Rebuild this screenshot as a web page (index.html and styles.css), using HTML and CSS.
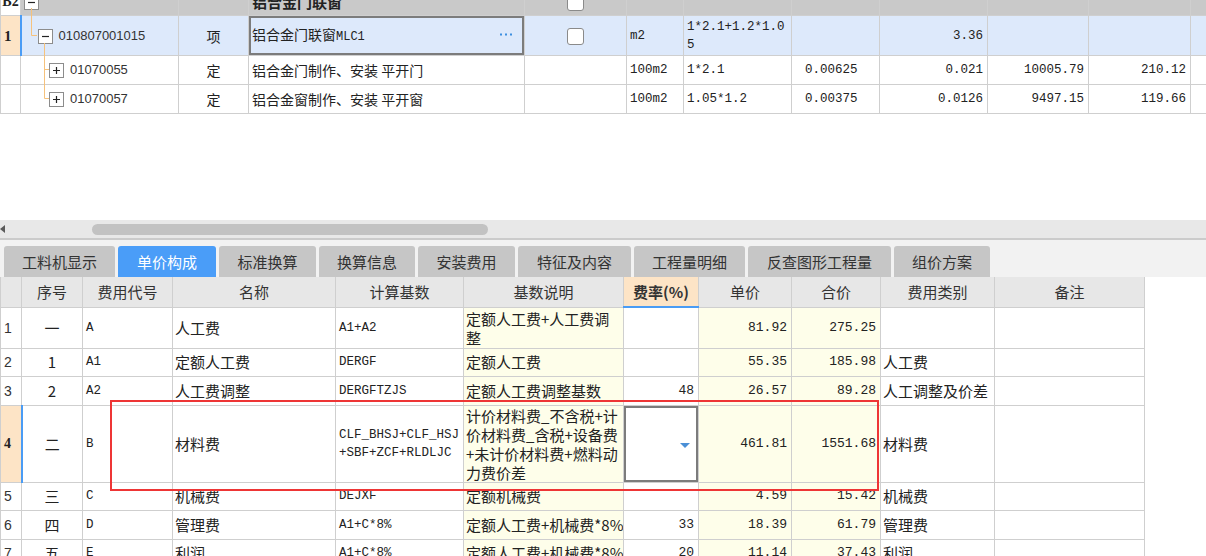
FILE: index.html
```html
<!DOCTYPE html>
<html lang="zh-CN">
<head>
<meta charset="utf-8">
<title>单价构成</title>
<link rel="stylesheet" href="styles.css">
</head>
<body>
<div class="top">
  <table class="tt">
    <colgroup>
      <col class="w20"><col class="w158"><col class="w70"><col class="w276"><col class="w102"><col class="w57"><col class="w108"><col class="w88"><col class="w108"><col class="w101"><col class="w102"><col class="w40">
    </colgroup>
    <tr class="r0">
      <td class="num0">B2</td>
      <td class="tree p0"><span class="box"><svg width="9" height="9" viewBox="0 0 9 9"><path d="M1 4.5h7" stroke="#222" stroke-width="1.2"/></svg></span></td>
      <td></td>
      <td class="bold">铝合金门联窗</td>
      <td class="c"><span class="chk"></span></td>
      <td></td><td></td><td></td><td></td><td></td><td></td><td></td>
    </tr>
    <tr class="r1 sel">
      <td class="num1">1</td>
      <td class="tree p1"><span class="box"><svg width="9" height="9" viewBox="0 0 9 9"><path d="M1 4.5h7" stroke="#222" stroke-width="1.2"/></svg></span><span class="code">010807001015</span></td>
      <td class="c">项</td>
      <td class="edit"><span class="etext">铝合金门联窗<span class="mono">MLC1</span></span><svg class="dots" width="12" height="3" viewBox="0 0 12 3"><rect x="0" y="0.5" width="2" height="2" fill="#3d8fe0"/><rect x="5" y="0.5" width="2" height="2" fill="#3d8fe0"/><rect x="10" y="0.5" width="2" height="2" fill="#3d8fe0"/></svg></td>
      <td class="c"><span class="chk"></span></td>
      <td class="mono">m2</td>
      <td class="mono lh">1*2.1+1.2*1.0<br>5</td>
      <td></td>
      <td class="mono r">3.36</td>
      <td></td><td></td><td></td>
    </tr>
    <tr class="r2">
      <td></td>
      <td class="tree p2"><span class="box"><svg width="9" height="9" viewBox="0 0 9 9"><path d="M1 4.5h7M4.5 1v7" stroke="#222" stroke-width="1.2"/></svg></span><span class="code">01070055</span></td>
      <td class="c">定</td>
      <td>铝合金门制作、安装 平开门</td>
      <td></td>
      <td class="mono">100m2</td>
      <td class="mono">1*2.1</td>
      <td class="mono ind">0.00625</td>
      <td class="mono r">0.021</td>
      <td class="mono r">10005.79</td>
      <td class="mono r">210.12</td>
      <td></td>
    </tr>
    <tr class="r2">
      <td></td>
      <td class="tree p2"><span class="box"><svg width="9" height="9" viewBox="0 0 9 9"><path d="M1 4.5h7M4.5 1v7" stroke="#222" stroke-width="1.2"/></svg></span><span class="code">01070057</span></td>
      <td class="c">定</td>
      <td>铝合金窗制作、安装 平开窗</td>
      <td></td>
      <td class="mono">100m2</td>
      <td class="mono">1.05*1.2</td>
      <td class="mono ind">0.00375</td>
      <td class="mono r">0.0126</td>
      <td class="mono r">9497.15</td>
      <td class="mono r">119.66</td>
      <td></td>
    </tr>
  </table>
  <svg class="treelines" width="60" height="113" viewBox="0 0 60 113">
    <path d="M31.5 8V35.5H37M44.5 43V98.5H49M44.5 69.5H49" fill="none" stroke="#f6c27c" stroke-width="1"/>
  </svg>
</div>

<div class="hscroll">
  <span class="arrow"></span>
  <span class="thumb"></span>
</div>

<div class="lower">
  <div class="tabs">
    <div class="tab t1">工料机显示</div>
    <div class="tab t2 active">单价构成</div>
    <div class="tab t3">标准换算</div>
    <div class="tab t4">换算信息</div>
    <div class="tab t5">安装费用</div>
    <div class="tab t6">特征及内容</div>
    <div class="tab t7">工程量明细</div>
    <div class="tab t8">反查图形工程量</div>
    <div class="tab t9">组价方案</div>
  </div>

  <table class="lt">
    <colgroup>
      <col class="w21"><col class="w61"><col class="w90"><col class="w163"><col class="w128"><col class="w160"><col class="w75"><col class="w93"><col class="w89"><col class="w114"><col class="w150">
    </colgroup>
    <tr class="hd">
      <th></th><th>序号</th><th>费用代号</th><th>名称</th><th>计算基数</th><th>基数说明</th><th class="rate">费率(%)</th><th>单价</th><th>合价</th><th>费用类别</th><th>备注</th>
    </tr>
    <tr class="h41">
      <td class="rn">1</td><td class="c">一</td><td class="mono">A</td><td>人工费</td><td class="mono">A1+A2</td>
      <td class="y ml">定额人工费+人工费调<br>整</td><td></td><td class="y mono r">81.92</td><td class="y mono r">275.25</td><td></td><td></td>
    </tr>
    <tr class="h28">
      <td class="rn">2</td><td class="c">1</td><td class="mono">A1</td><td>定额人工费</td><td class="mono">DERGF</td>
      <td class="y">定额人工费</td><td></td><td class="y mono r">55.35</td><td class="y mono r">185.98</td><td>人工费</td><td></td>
    </tr>
    <tr class="h29">
      <td class="rn">3</td><td class="c">2</td><td class="mono">A2</td><td>人工费调整</td><td class="mono">DERGFTZJS</td>
      <td class="y">定额人工费调整基数</td><td class="mono r">48</td><td class="y mono r">26.57</td><td class="y mono r">89.28</td><td>人工调整及价差</td><td></td>
    </tr>
    <tr class="h77">
      <td class="rn cur">4</td><td class="c">二</td><td class="mono">B</td><td>材料费</td><td class="mono lh">CLF_BHSJ+CLF_HSJ<br>+SBF+ZCF+RLDLJC</td>
      <td class="y ml">计价材料费_不含税+计<br>价材料费_含税+设备费<br>+未计价材料费+燃料动<br>力费价差</td>
      <td class="drop"><span class="tri"></span></td><td class="y mono r">461.81</td><td class="y mono r">1551.68</td><td>材料费</td><td></td>
    </tr>
    <tr class="h28">
      <td class="rn">5</td><td class="c">三</td><td class="mono">C</td><td>机械费</td><td class="mono">DEJXF</td>
      <td class="y">定额机械费</td><td></td><td class="y mono r">4.59</td><td class="y mono r">15.42</td><td>机械费</td><td></td>
    </tr>
    <tr class="h29">
      <td class="rn">6</td><td class="c">四</td><td class="mono">D</td><td>管理费</td><td class="mono">A1+C*8%</td>
      <td class="y">定额人工费+机械费*8%</td><td class="mono r">33</td><td class="y mono r">18.39</td><td class="y mono r">61.79</td><td>管理费</td><td></td>
    </tr>
    <tr class="h28">
      <td class="rn">7</td><td class="c">五</td><td class="mono">E</td><td>利润</td><td class="mono">A1+C*8%</td>
      <td class="y">定额人工费+机械费*8%</td><td class="mono r">20</td><td class="y mono r">11.14</td><td class="y mono r">37.43</td><td>利润</td><td></td>
    </tr>
  </table>

  <div class="mark"></div>
</div>
</body>
</html>
```

FILE: styles.css
```css
* { box-sizing: border-box; }
html, body { margin: 0; padding: 0; }
body {
  width: 1206px;
  height: 556px;
  overflow: hidden;
  background: #fff;
  color: #222;
  font-family: "Noto Sans CJK SC", "Liberation Sans", sans-serif;
}

/* ---------- top grid ---------- */
.top {
  position: relative;
  height: 220px;
  overflow: hidden;
}
.tt {
  border-collapse: collapse;
  table-layout: fixed;
  width: 1230px;
  margin-top: -13px;
  font-size: 14px;
}
.tt td {
  border: 1px solid #cfcfcf;
  padding: 0 3px;
  white-space: nowrap;
  overflow: hidden;
  vertical-align: middle;
  line-height: 16px;
}
.w20 { width: 20px; } .w158 { width: 158px; } .w70 { width: 70px; } .w276 { width: 276px; }
.w102 { width: 102px; } .w57 { width: 57px; } .w108 { width: 108px; } .w88 { width: 88px; }
.w101 { width: 101px; } .w40 { width: 40px; }
.w21 { width: 21px; } .w61 { width: 61px; } .w90 { width: 90px; } .w163 { width: 163px; }
.w128 { width: 128px; } .w160 { width: 160px; } .w75 { width: 75px; } .w93 { width: 93px; }
.w89 { width: 89px; } .w114 { width: 114px; } .w150 { width: 150px; }

.r0 { height: 28px; background: #c9c9c9; }
.r1 { height: 40px; }
.r2 { height: 29px; }
.sel { background: #dde9fb; }

.num0 {
  background: #fff;
  font-family: "Liberation Serif", serif;
  font-weight: bold;
  font-size: 14px;
  text-align: center;
  padding: 0 !important;
}
.num1 {
  background: #fde4c6;
  border-right: 2px solid #4a9cf5 !important;
  font-family: "Liberation Serif", serif;
  font-weight: bold;
  font-size: 15px;
  padding-left: 3px !important;
}
.bold { font-weight: bold; font-size: 15px; }
.c { text-align: center; }
.r { text-align: right; padding-right: 4px !important; }
.mono {
  font-family: "Liberation Mono", monospace;
  font-size: 12.5px;
}
.ind { padding-left: 13px !important; }
.lh { line-height: 18px !important; }

.tree { font-size: 13px; }
.tree .box {
  display: inline-flex;
  align-items: center;
  justify-content: center;
  width: 15px;
  height: 15px;
  border: 1px solid #8c8c8c;
  background: #fff;
  vertical-align: middle;
  margin-right: 6px;
}
.tree .code {
  font-family: "Liberation Sans", sans-serif;
  font-size: 13px;
  color: #333;
  vertical-align: middle;
}
.p0 { padding-left: 3px !important; }
.p1 { padding-left: 16px !important; }
.p2 { padding-left: 28px !important; }

.edit {
  box-shadow: inset 0 0 0 2px #7c7c7c;
}
.edit .etext { float: left; }
.edit .mono { font-size: 12px; }
.edit .dots {
  float: right;
  margin: 7px 9px 0 0;
}
.chk {
  display: inline-block;
  width: 17px;
  height: 17px;
  border: 1px solid #8a8a8a;
  border-radius: 3px;
  background: #fff;
  vertical-align: middle;
}
.treelines {
  position: absolute;
  left: 0;
  top: 0;
}

/* ---------- scrollbar ---------- */
.hscroll {
  height: 20px;
  background: #e8e8e8;
  border-bottom: 2px solid #cbcbcb;
  display: flex;
  align-items: center;
}
.arrow {
  width: 0;
  height: 0;
  border-top: 4px solid transparent;
  border-bottom: 4px solid transparent;
  border-right: 5px solid #5a5a5a;
}
.thumb {
  margin-left: 87px;
  width: 396px;
  height: 11px;
  border-radius: 6px;
  background: #c2c2c2;
}

/* ---------- lower panel ---------- */
.lower { position: relative; }
.tabs {
  height: 37px;
  background: #f2f2f2;
  display: flex;
  align-items: flex-end;
  gap: 3px;
  padding-left: 4px;
}
.tab {
  height: 31px;
  background: #c6c6c6;
  border-radius: 3px 3px 0 0;
  display: flex;
  align-items: center;
  justify-content: center;
  font-size: 15px;
  color: #333;
}
.tab.active { background: #4a9df8; color: #fff; }
.t1 { width: 111px; } .t2 { width: 98px; } .t3 { width: 97px; } .t4 { width: 96px; }
.t5 { width: 97px; } .t6 { width: 113px; } .t7 { width: 111px; } .t8 { width: 143px; }
.t9 { width: 96px; }

.lt {
  border-collapse: collapse;
  table-layout: fixed;
  width: 1144px;
  font-size: 15px;
}
.lt th, .lt td {
  border: 1px solid #cfcfcf;
  padding: 0 2px;
  vertical-align: middle;
  white-space: nowrap;
  overflow: hidden;
  line-height: 18px;
}
.lt td.ml { line-height: 19px; }
.lt th {
  background: #e7e7e7;
  font-weight: normal;
  color: #333;
  height: 30px;
}
.lt th.rate {
  background: #fde4c6;
  font-weight: bold;
  border-bottom: 2px solid #4a9cf5;
}
.lt tr:first-child th { border-top: none; }
.lt .mono { font-size: 12.5px; padding-left: 3px; }
.lt .mono.r { font-size: 13px; }
.lt .y { background: #fefeea; }
.h41 { height: 41px; }
.h28 { height: 28px; }
.h29 { height: 29px; }
.h77 { height: 77px; }
.rn {
  font-family: "Liberation Sans", sans-serif;
  font-size: 14px;
  color: #333;
  padding-left: 3px !important;
}
.rn.cur {
  background: #fde4c6;
  border-right: 2px solid #4a9cf5;
  font-family: "Liberation Serif", serif;
  font-weight: bold;
  color: #222;
}
.drop {
  background: #fff;
  box-shadow: inset 0 0 0 2px #7c7c7c;
  text-align: right;
  padding-right: 8px !important;
}
.tri {
  display: inline-block;
  width: 0;
  height: 0;
  border-left: 5px solid transparent;
  border-right: 5px solid transparent;
  border-top: 5px solid #4a8fd6;
  vertical-align: middle;
}
.mark {
  position: absolute;
  left: 110px;
  top: 160px;
  width: 769px;
  height: 91px;
  border: 2px solid #ee3535;
  pointer-events: none;
}
```
